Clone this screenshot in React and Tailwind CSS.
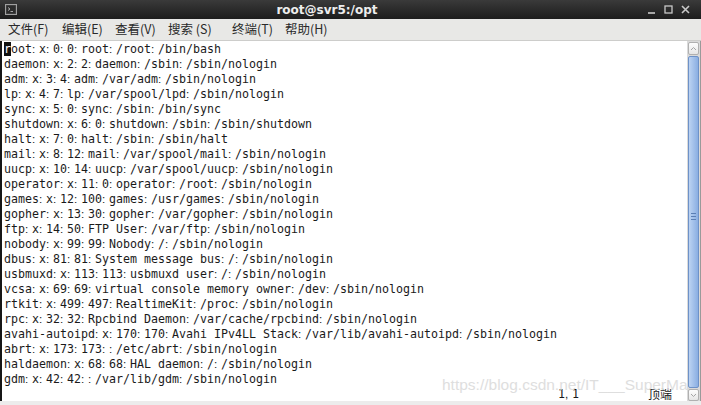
import React from "react";

const lines = [
  "root:x:0:0:root:/root:/bin/bash",
  "daemon:x:2:2:daemon:/sbin:/sbin/nologin",
  "adm:x:3:4:adm:/var/adm:/sbin/nologin",
  "lp:x:4:7:lp:/var/spool/lpd:/sbin/nologin",
  "sync:x:5:0:sync:/sbin:/bin/sync",
  "shutdown:x:6:0:shutdown:/sbin:/sbin/shutdown",
  "halt:x:7:0:halt:/sbin:/sbin/halt",
  "mail:x:8:12:mail:/var/spool/mail:/sbin/nologin",
  "uucp:x:10:14:uucp:/var/spool/uucp:/sbin/nologin",
  "operator:x:11:0:operator:/root:/sbin/nologin",
  "games:x:12:100:games:/usr/games:/sbin/nologin",
  "gopher:x:13:30:gopher:/var/gopher:/sbin/nologin",
  "ftp:x:14:50:FTP User:/var/ftp:/sbin/nologin",
  "nobody:x:99:99:Nobody:/:/sbin/nologin",
  "dbus:x:81:81:System message bus:/:/sbin/nologin",
  "usbmuxd:x:113:113:usbmuxd user:/:/sbin/nologin",
  "vcsa:x:69:69:virtual console memory owner:/dev:/sbin/nologin",
  "rtkit:x:499:497:RealtimeKit:/proc:/sbin/nologin",
  "rpc:x:32:32:Rpcbind Daemon:/var/cache/rpcbind:/sbin/nologin",
  "avahi-autoipd:x:170:170:Avahi IPv4LL Stack:/var/lib/avahi-autoipd:/sbin/nologin",
  "abrt:x:173:173::/etc/abrt:/sbin/nologin",
  "haldaemon:x:68:68:HAL daemon:/:/sbin/nologin",
  "gdm:x:42:42::/var/lib/gdm:/sbin/nologin",
];

function Punct({ ch }) {
  return (
    <span className="inline-block w-[7px] text-left font-['Liberation_Sans',sans-serif]">
      {ch}
    </span>
  );
}

function Line({ text, cursor }) {
  const parts = text.split(/([:,])/);
  const out = [];
  parts.forEach((p, i) => {
    if (p === ":" || p === ",") {
      out.push(<Punct key={i} ch={p} />);
    } else if (p) {
      if (cursor && i === 0) {
        out.push(
          <span key={i + "c"} className="bg-[#111] text-white">
            {p[0]}
          </span>
        );
        out.push(<span key={i}>{p.slice(1)}</span>);
      } else {
        out.push(<span key={i}>{p}</span>);
      }
    }
  });
  return <div className="h-[15px] leading-[15px] whitespace-pre">{out}</div>;
}

const menus = [
  { t: "文件(F)", w: "w-[54px]" },
  { t: "编辑(E)", w: "w-[53px]" },
  { t: "查看(V)", w: "w-[53px]" },
  { t: "搜索 (S)", w: "w-[64px]" },
  { t: "终端(T)", w: "w-[53px]" },
  { t: "帮助(H)", w: "w-[53px]" },
];

export default function App() {
  return (
    <div className="w-[701px] h-[405px] overflow-hidden flex flex-col bg-[#ececec] relative">
      {/* title bar */}
      <div className="h-[19px] flex items-center bg-gradient-to-b from-[#3a3a3a] to-[#1d1d1d] relative">
        <div className="w-[22px] pl-[5px] flex items-center">
          <svg width="12" height="11" viewBox="0 0 12 11">
            <rect x="0.5" y="0.5" width="11" height="10" fill="#505050" stroke="#a0a0a0" />
            <rect x="1.5" y="1.5" width="9" height="8" fill="#2c2c2c" />
            <path d="M3 3.5 L5 5 L3 6.5" stroke="#b8b8b8" strokeWidth="0.9" fill="none" />
            <path d="M5.5 7.5 H8" stroke="#b8b8b8" strokeWidth="0.9" />
          </svg>
        </div>
        <div className="flex-1 flex justify-center pr-[12px] text-[12px] font-bold text-[#ededed] font-['DejaVu_Sans',sans-serif] leading-none">
          root@svr5:/opt
        </div>
        <div className="w-[57px] flex items-center gap-[8px] pl-[3px]">
          <svg width="9" height="9" viewBox="0 0 9 9">
            <path d="M1 8 H8" stroke="#c8c8c8" strokeWidth="1.6" />
          </svg>
          <svg width="9" height="9" viewBox="0 0 9 9">
            <rect x="1" y="1" width="7" height="7" fill="none" stroke="#c8c8c8" strokeWidth="1.3" />
          </svg>
          <svg width="9" height="9" viewBox="0 0 9 9">
            <path d="M1 1 L8 8 M8 1 L1 8" stroke="#c8c8c8" strokeWidth="1.6" />
          </svg>
        </div>
      </div>
      {/* menu bar */}
      <div className="h-[22px] flex items-center pl-[8px] bg-[#e8e8e6] border-b border-[#cdcdcb] text-[12.5px] text-[#2a2a2a] font-['Noto_Sans_CJK_SC',sans-serif]">
        {menus.map((m) => (
          <div key={m.t} className={`${m.w} whitespace-pre`}>
            {m.t}
          </div>
        ))}
      </div>
      {/* content */}
      <div className="h-[360px] flex bg-white relative">
        <div className="w-[2px] bg-[#161616]" />
        <div className="flex-1 pl-[2px] text-[11.63px] text-[#1a1a1a] font-['DejaVu_Sans_Mono',monospace]">
          {lines.map((l, i) => (
            <Line key={i} text={l} cursor={i === 0} />
          ))}
          <div className="h-[15px] leading-[15px] flex whitespace-pre">
            <div className="w-[554px]" />
            <div className="w-[90px]">
              1<Punct ch="," />1
            </div>
            <div className="font-['Noto_Sans_CJK_SC',sans-serif] text-[12px]">顶端</div>
          </div>
        </div>
        {/* watermark */}
        <div className="absolute left-[442px] top-[336px] text-[15.5px] text-[#dedede] font-['Liberation_Sans',sans-serif] whitespace-pre leading-none">
          https://blog.csdn.net/IT___SuperMan
        </div>
        {/* scrollbar */}
        <div className="w-[13px] flex flex-col pt-[1px] bg-[#dadada] relative">
          <div className="h-[13px] mx-[1px] rounded-[2px] bg-gradient-to-b from-[#fdfdfd] to-[#e6e6e6] border border-[#b0b0b0] flex items-center justify-center">
            <svg width="7" height="5" viewBox="0 0 7 5">
              <path d="M1 4 L3.5 1.5 L6 4" stroke="#a5a5a5" strokeWidth="1" fill="none" />
            </svg>
          </div>
          <div className="flex-1 mx-[1px] mt-[1px] rounded-[2px] border border-[#6e92c8] bg-gradient-to-r from-[#bcd3f2] to-[#8aaee2] flex items-center justify-center">
            <div className="flex flex-col gap-[2px] mt-[-12px]">
              <div className="w-[5px] h-[1px] bg-[#5b7fb5]" />
              <div className="w-[5px] h-[1px] bg-[#5b7fb5]" />
              <div className="w-[5px] h-[1px] bg-[#5b7fb5]" />
            </div>
          </div>
          <div className="h-[12px] mx-[1px] mt-[1px] rounded-[2px] bg-gradient-to-b from-[#fdfdfd] to-[#e6e6e6] border border-[#b0b0b0] flex items-center justify-center">
            <svg width="7" height="5" viewBox="0 0 7 5">
              <path d="M1 1 L3.5 3.5 L6 1" stroke="#a5a5a5" strokeWidth="1" fill="none" />
            </svg>
          </div>
        </div>
        <div className="w-[1px] bg-[#9a9a9a]" />
      </div>
      <div className="flex-1 bg-[#ececec]" />
    </div>
  );
}
